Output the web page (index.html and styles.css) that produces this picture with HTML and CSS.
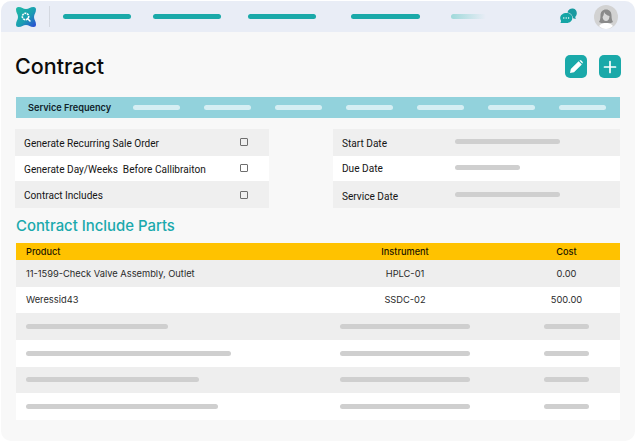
FILE: index.html
```html
<!DOCTYPE html>
<html lang="en">
<head>
<meta charset="utf-8">
<title>Contract</title>
<link rel="stylesheet" href="styles.css">
</head>
<body>
<div class="app">
  <header class="topbar">
    <svg class="logo" viewBox="0 0 22 22" width="22" height="22">
      <defs><linearGradient id="lg" gradientUnits="userSpaceOnUse" x1="2" y1="2" x2="20" y2="20"><stop offset="0" stop-color="#1fb8a6"/><stop offset=".55" stop-color="#1a9eb2"/><stop offset="1" stop-color="#2a50d2"/></linearGradient></defs>
      <path d="M1 3.500A2.500 2.500 0 0 1 3.500 1C7 1 8 3 11 3C14 3 15 1 18.500 1A2.500 2.500 0 0 1 21 3.500C21 7 19 8 19 11C19 14 21 15 21 18.500A2.500 2.500 0 0 1 18.500 21C15 21 14 19 11 19C8 19 7 21 3.500 21A2.500 2.500 0 0 1 1 18.500C1 15 3 14 3 11C3 8 1 7 1 3.500Z" fill="url(#lg)"/>
      <circle cx="10.500" cy="10.500" r="3.200" fill="none" stroke="#fff" stroke-width="1.600" stroke-dasharray="2 .7"/>
      <path d="M12.500 12.500L15 15" stroke="#fff" stroke-width="1.500" stroke-linecap="round"/>
    </svg>
    <span class="divider"></span>
    <nav class="nav">
      <span class="nav-bar nav-a"></span>
      <span class="nav-bar nav-b"></span>
      <span class="nav-bar nav-c"></span>
      <span class="nav-bar nav-d"></span>
      <span class="nav-bar nav-fade"></span>
    </nav>
    <svg class="chat" viewBox="0 0 17 17" width="17" height="17">
      <path d="M7.500 4.500C8 1.800 10.500 .3 13 .6C15.500 1 17 3.200 16.800 5.500C16.700 7 16 8.200 15.200 9L15.800 11L13 10.300C12.500 7 10.500 4.800 7.500 4.500Z" fill="#1a9aa0"/>
      <path d="M6.500 5C10 5 12.300 7 12.300 10C12.300 12.800 10 15 6.500 15H.3C1 14.200 1.100 13.200 1 12.700C.4 11.700.2 10.900.2 10C.2 7 3 5 6.500 5Z" fill="#15a5a5"/>
      <circle cx="3.800" cy="10" r=".7" fill="#fff"/><circle cx="6.200" cy="10" r=".7" fill="#fff"/><circle cx="8.600" cy="10" r=".7" fill="#fff"/>
    </svg>
    <svg class="avatar" viewBox="0 0 24 24" width="24" height="24">
      <circle cx="12" cy="12" r="12" fill="#d2d2d2"/>
      <path d="M12 4.500C8.500 4.500 6.500 7 6.500 10.500C6.500 13.500 6 15.500 5 17C7 18 9 18.500 12 18.500S17 18 19 17C18 15.500 17.500 13.500 17.500 10.500C17.500 7 15.500 4.500 12 4.500Z" fill="#8a8a8a"/>
      <path d="M10 7C10 10 9 11.500 8.500 12C9 15 10.500 16 12 16C14 16 15.500 14 15.500 11C13 10.500 11 9 10 7Z" fill="#d8d8d8"/>
      <path d="M5 21C7 18.500 9.500 18 12 18S17 18.500 19 21C17 23 14.500 24 12 24S7 23 5 21Z" fill="#fff"/>
    </svg>
  </header>

  <main class="main">
    <div class="title-row">
      <h1 class="title">Contract</h1>
      <div class="actions">
        <button class="icon-btn" type="button" aria-label="Edit">
          <svg viewBox="0 0 14 14" width="14" height="14"><path d="M9.600 1.200L12.800 4.400L5 12.200L1 13L1.800 9ZM10.600 .6C11.200 0 11.800 0 12.300 .5L13.500 1.700C14 2.200 14 2.800 13.400 3.400L13.300 3.500L10.500 .7Z" fill="#fff"/></svg>
        </button>
        <button class="icon-btn" type="button" aria-label="Add">
          <svg viewBox="0 0 14 14" width="14" height="14"><path d="M7 1.500V12.500M1.500 7H12.500" stroke="#fff" stroke-width="1.700" stroke-linecap="round"/></svg>
        </button>
      </div>
    </div>

    <div class="band">
      <span class="band-label">Service Frequency</span>
      <div class="band-bars">
        <span class="band-bar"></span><span class="band-bar"></span><span class="band-bar"></span>
        <span class="band-bar"></span><span class="band-bar"></span><span class="band-bar"></span><span class="band-bar"></span>
      </div>
    </div>

    <section class="forms">
      <div class="form-col form-left">
        <div class="form-row"><span>Generate Recurring Sale Order</span><i class="check"></i></div>
        <div class="form-row"><span>Generate Day/Weeks&nbsp; Before Callibraiton</span><i class="check"></i></div>
        <div class="form-row"><span>Contract Includes</span><i class="check"></i></div>
      </div>
      <div class="form-col form-right">
        <div class="form-row"><span class="date-label">Start Date</span><i class="bar date-long"></i></div>
        <div class="form-row"><span class="date-label">Due Date</span><i class="bar date-short"></i></div>
        <div class="form-row"><span class="date-label">Service Date</span><i class="bar date-long"></i></div>
      </div>
    </section>

    <h2 class="subtitle">Contract Include Parts</h2>

    <section class="table">
      <div class="thead">
        <span>Product</span><span class="center">Instrument</span><span class="center">Cost</span>
      </div>
      <div class="tbody">
        <div class="tr"><span>11-1599-Check Valve Assembly, Outlet</span><span class="center">HPLC-01</span><span class="center">0.00</span></div>
        <div class="tr"><span>Weressid43</span><span class="center">SSDC-02</span><span class="center">500.00</span></div>
        <div class="tr"><i class="bar p1"></i><i class="bar inst"></i><i class="bar cost"></i></div>
        <div class="tr"><i class="bar p2"></i><i class="bar inst"></i><i class="bar cost"></i></div>
        <div class="tr"><i class="bar p3"></i><i class="bar inst"></i><i class="bar cost"></i></div>
        <div class="tr"><i class="bar p4"></i><i class="bar inst"></i><i class="bar cost"></i></div>
      </div>
    </section>
  </main>
</div>
</body>
</html>
```
FILE: styles.css
```css
* { box-sizing: border-box; }
html, body { margin: 0; background: #fff; }
body { width: 635px; height: 442px; overflow: hidden; padding: 1px 0 1px 1px; font-family: "Roboto", "Liberation Sans", sans-serif; color: #111; }
.app { height: 440px; background: #f8f8f8; border-radius: 10px; overflow: hidden; }

.topbar { height: 31px; background: #e9edf6; display: flex; align-items: center; padding: 0 17px 0 14px; }
.logo { flex: none; margin-top: 1px; }
.divider { width: 1px; height: 21px; background: #d4d8e0; margin-left: 12px; }
.nav { flex: 1; display: flex; align-items: center; padding-left: 13px; height: 5px; }
.nav-bar { height: 5px; border-radius: 3px; background: #1aa9a9; width: 68px; flex: none; }
.nav-b { margin-left: 22px; }
.nav-c { margin-left: 27px; }
.nav-d { margin-left: 35px; width: 69px; }
.nav-fade { margin-left: 31px; width: 35px; background: linear-gradient(90deg, #9fd9da, #e9edf6); }
.chat { flex: none; margin-right: 17px; }
.avatar { flex: none; }

.main { padding: 0 15px 0 14px; }
.title-row { display: flex; justify-content: space-between; align-items: flex-start; height: 65px; }
.title { margin: 19px 0 0; font: 500 21.500px/30px "Inter", "Lato", sans-serif; color: #0c0c0c; }
.actions { display: flex; gap: 12px; margin: 23px -1px 0 0; }
.icon-btn { width: 22px; height: 23px; border: 0; padding: 0; border-radius: 5px; background: #1aa9a9; display: flex; align-items: center; justify-content: center; }

.band { margin-left: 1px; height: 21px; background: #92d2dc; display: flex; align-items: center; padding-left: 12px; }
.band-label { width: 105px; font: 600 9.200px/12px "Inter", "Lato", sans-serif; color: #10222a; white-space: nowrap; }
.band-bars { display: flex; gap: 24px; }
.band-bar { width: 47px; height: 5px; border-radius: 3px; background: #d5eef3; }

.forms { display: flex; justify-content: space-between; margin-top: 11px; height: 79px; }
.form-col { display: grid; grid-template-rows: 27px 25px 27px; }
.form-left { width: 254px; }
.form-right { width: 287px; }
.form-row { display: flex; align-items: center; font-size: 10.100px; background: #efefef; color: #151515; padding-left: 9px; }
.form-row:nth-child(2) { background: #fff; }
.form-left .form-row span { padding-top: 2px; }
.form-right .form-row:first-child .date-label { padding-top: 2px; }
.form-right .form-row:last-child .date-label { padding-top: 4px; }
.form-right .date-label { width: 113px; }
.check { width: 8px; height: 8px; border: 1px solid #6e6e6e; border-radius: 1px; margin-left: auto; margin-right: 21px; margin-top: -2px; }
.form-row:last-child .check, .form-row:last-child .bar { margin-top: 0; }
.bar { display: block; height: 5px; border-radius: 3px; background: #cfcfcf; }
.date-long { width: 105px; margin-top: -2px; }
.date-short { width: 65px; margin-top: -2px; }

.subtitle { margin: 9px 0 1px 1px; height: 18px; font: 500 14.900px/18px "Inter", "Lato", sans-serif; color: #1aa9ad; }

.table { margin: 8px 0 0 1px; }
.thead, .tr { display: grid; grid-template-columns: 281px 216px 107px; align-items: center; }
.thead { height: 17px; background: #ffc200; font: 500 9.200px/12px "Inter", "Lato", sans-serif; color: #1b1500; }
.thead span:first-child, .tr span:first-child { padding-left: 10px; }
.center { text-align: center; }
.tbody { height: 160px; display: grid; grid-template-rows: repeat(6, 1fr); }
.tr { background: #fff; font: 400 9.300px/12px "Inter", "Lato", sans-serif; color: #2a2a2a; }
.tr:nth-child(odd) { background: #eee; }
.tr:first-child span { padding-top: 1px; }
.tr .bar { margin: 0 auto; }
.tr .p1, .tr .p2, .tr .p3, .tr .p4 { margin-left: 10px; }
.p1 { width: 142px; }
.p2 { width: 205px; }
.p3 { width: 173px; }
.p4 { width: 192px; }
.inst { width: 130px; }
.cost { width: 45px; }
```
